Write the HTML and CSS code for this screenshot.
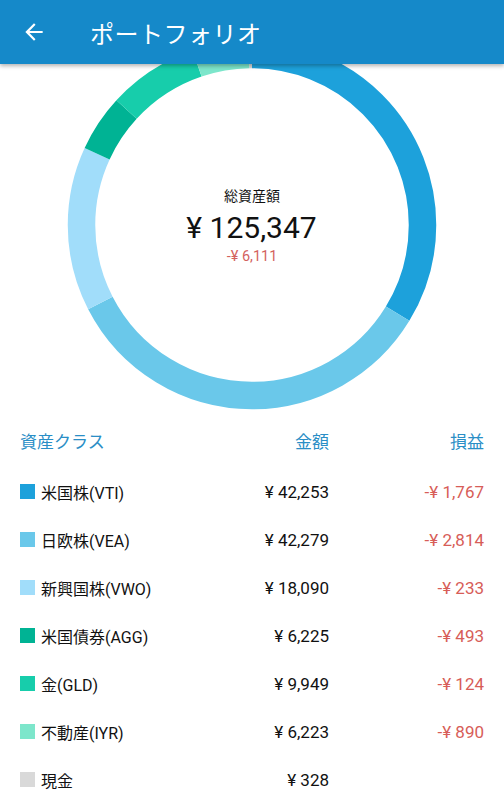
FILE: index.html
```html
<!DOCTYPE html>
<html lang="ja">
<head>
<meta charset="UTF-8">
<title>ポートフォリオ</title>
<link rel="stylesheet" href="styles.css">
</head>
<body>
	<div class="bar">
		<svg class="back" viewBox="0 0 24 24" width="26" height="26"><path d="M20 11H7.83l5.59-5.59L12 4l-8 8 8 8 1.41-1.41L7.83 13H20v-2z" fill="#fff"/></svg>
		<span class="title">ポートフォリオ</span>
	</div>
	<div class="chart">
		<svg class="donut" viewBox="0 0 504 352" width="504" height="352">
			<g transform="rotate(-90 252 161)" fill="none" stroke-width="27.5">
				<circle cx="252" cy="161" r="170.5" pathLength="100" stroke="#1da1db" stroke-dasharray="33.71 100" stroke-dashoffset="0"/>
				<circle cx="252" cy="161" r="170.5" pathLength="100" stroke="#6ac8ea" stroke-dasharray="33.73 100" stroke-dashoffset="-33.71"/>
				<circle cx="252" cy="161" r="170.5" pathLength="100" stroke="#a1ddfa" stroke-dasharray="14.43 100" stroke-dashoffset="-67.44"/>
				<circle cx="252" cy="161" r="170.5" pathLength="100" stroke="#00b394" stroke-dasharray="4.97 100" stroke-dashoffset="-81.87"/>
				<circle cx="252" cy="161" r="170.5" pathLength="100" stroke="#17cdab" stroke-dasharray="7.94 100" stroke-dashoffset="-86.84"/>
				<circle cx="252" cy="161" r="170.5" pathLength="100" stroke="#7de6cb" stroke-dasharray="4.96 100" stroke-dashoffset="-94.78"/>
				<circle cx="252" cy="161" r="170.5" pathLength="100" stroke="#d9d9d9" stroke-dasharray="0.26 100" stroke-dashoffset="-99.74"/>
			</g>
		</svg>
		<div class="total">
			<div class="total-label">総資産額</div>
			<div class="total-value">¥ 125,347</div>
			<div class="total-diff">-¥ 6,111</div>
		</div>
	</div>
	<div class="table">
		<div class="row head">
			<span class="name">資産クラス</span>
			<span class="amount">金額</span>
			<span class="pl">損益</span>
		</div>
		<div class="row">
			<span class="name"><i class="sw" style="background:#1da1db"></i>米国株(VTI)</span>
			<span class="amount">¥ 42,253</span>
			<span class="pl">-¥ 1,767</span>
		</div>
		<div class="row">
			<span class="name"><i class="sw" style="background:#6ac8ea"></i>日欧株(VEA)</span>
			<span class="amount">¥ 42,279</span>
			<span class="pl">-¥ 2,814</span>
		</div>
		<div class="row">
			<span class="name"><i class="sw" style="background:#a1ddfa"></i>新興国株(VWO)</span>
			<span class="amount">¥ 18,090</span>
			<span class="pl">-¥ 233</span>
		</div>
		<div class="row">
			<span class="name"><i class="sw" style="background:#00b394"></i>米国債券(AGG)</span>
			<span class="amount">¥ 6,225</span>
			<span class="pl">-¥ 493</span>
		</div>
		<div class="row">
			<span class="name"><i class="sw" style="background:#17cdab"></i>金(GLD)</span>
			<span class="amount">¥ 9,949</span>
			<span class="pl">-¥ 124</span>
		</div>
		<div class="row">
			<span class="name"><i class="sw" style="background:#7de6cb"></i>不動産(IYR)</span>
			<span class="amount">¥ 6,223</span>
			<span class="pl">-¥ 890</span>
		</div>
		<div class="row">
			<span class="name"><i class="sw" style="background:#d9d9d9"></i>現金</span>
			<span class="amount">¥ 328</span>
			<span class="pl"></span>
		</div>
	</div>
</body>
</html>
```

FILE: styles.css
```css
body {
	margin: 0;
	background-color: #fff;
	font-family: Roboto, "Noto Sans CJK JP", sans-serif;
	color: #111;
	overflow: hidden;
}
.bar {
	height: 64px;
	background-color: #1589c9;
	display: flex;
	align-items: center;
	position: relative;
	z-index: 2;
	box-shadow: 0 2px 4px rgba(0,0,0,.3);
}
.back {
	margin-left: 21px;
}
.title {
	margin-left: 43px;
	color: #fff;
	font-size: 24px;
	letter-spacing: 0.5px;
}
.chart {
	height: 352px;
	position: relative;
}
.donut {
	display: block;
}
.total {
	position: absolute;
	left: 0;
	right: 0;
	top: 122px;
	text-align: center;
}
.total-label {
	font-size: 14px;
	line-height: 20px;
}
.total-value {
	font-size: 30px;
	line-height: 38px;
	margin-top: 3px;
	margin-left: -1px;
}
.total-diff {
	font-size: 14.5px;
	line-height: 20px;
	color: #d3625e;
}
.table {
	padding: 0 20px;
}
.row {
	display: flex;
	align-items: center;
	height: 48px;
	font-size: 16px;
}
.row.head {
	height: 48px;
	margin-bottom: 4px;
	font-size: 17px;
	color: #2a8ec6;
}
.name {
	flex: 1;
	display: flex;
	align-items: center;
}
.sw {
	width: 15px;
	height: 15px;
	margin-right: 6px;
	margin-top: -2px;
}
.amount {
	width: 160px;
	text-align: right;
	font-size: 17px;
}
.pl {
	width: 155px;
	text-align: right;
	font-size: 17px;
	color: #d75d58;
}
.head .pl {
	color: #2a8ec6;
}
```
